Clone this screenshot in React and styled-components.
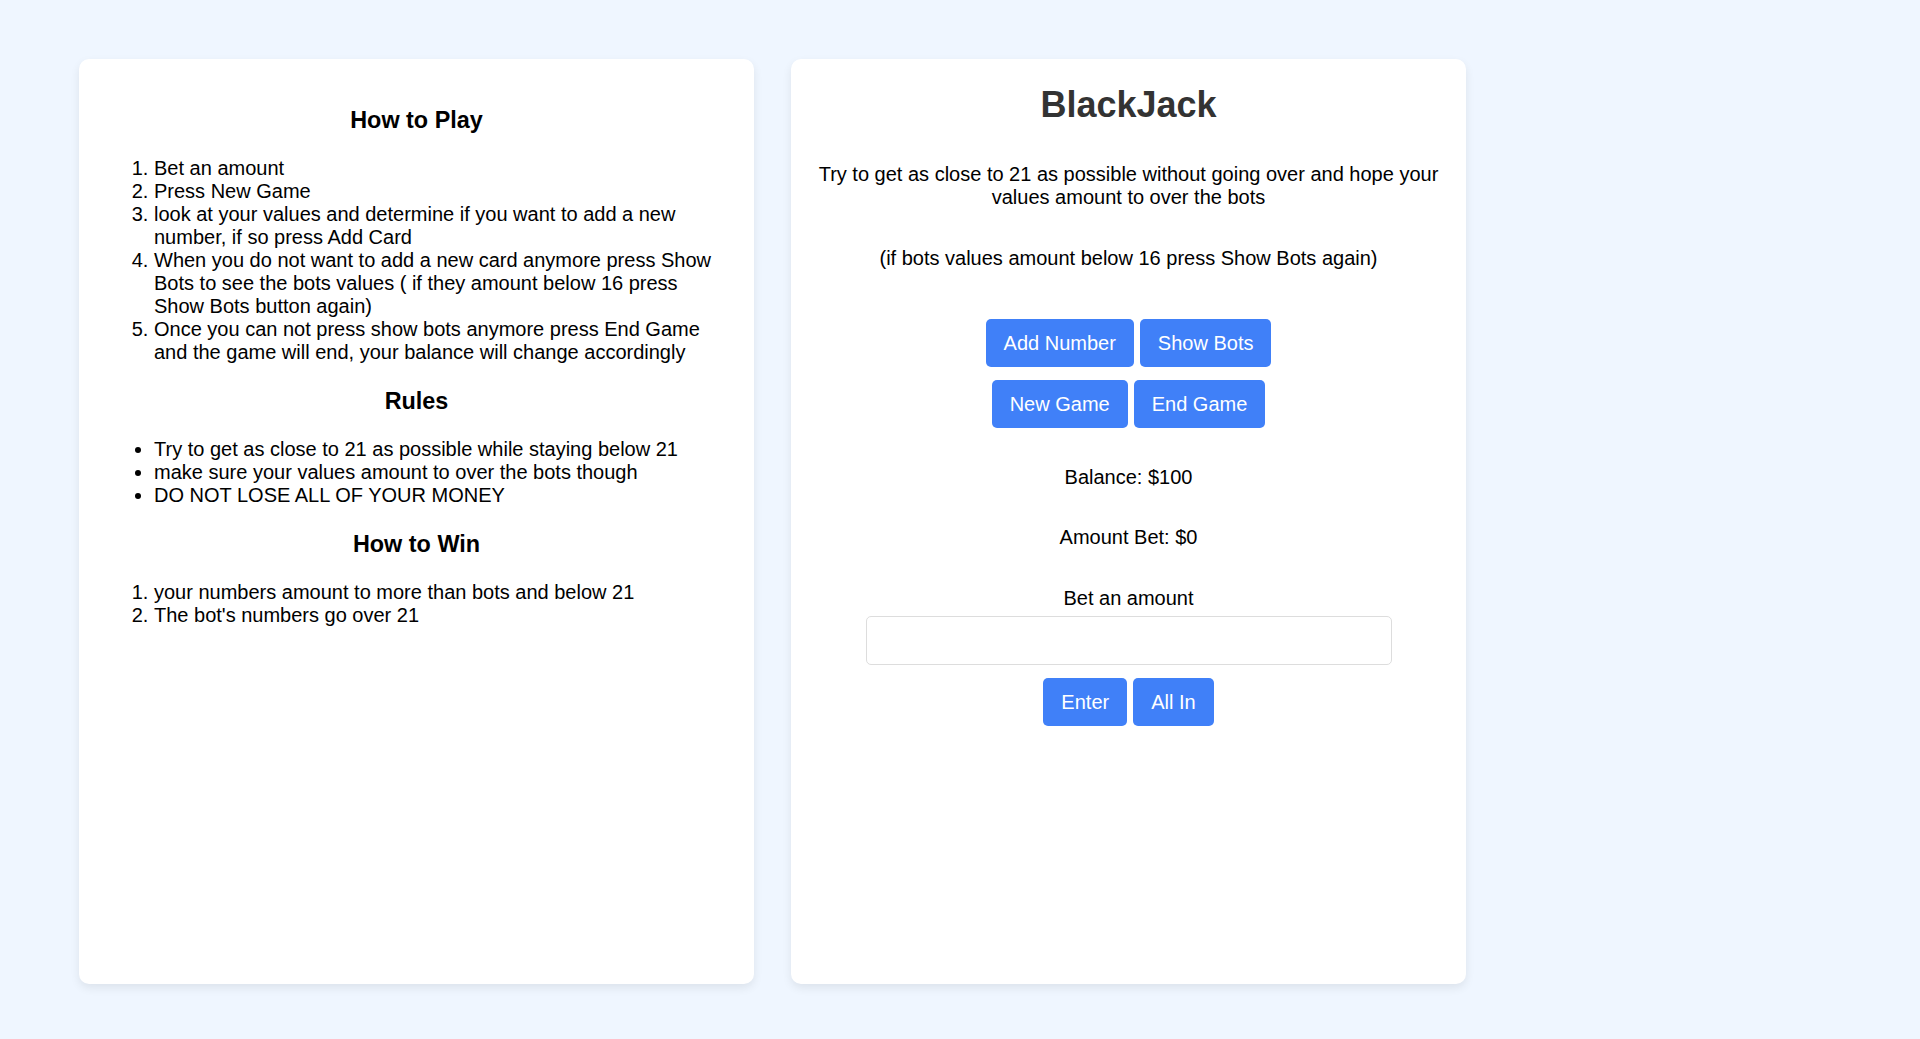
import styled, { createGlobalStyle } from "styled-components"

const GlobalStyle = createGlobalStyle`
    body {
        margin: 0;
        background-color: #eff6ff;
        font-family: "Liberation Sans", Arial, sans-serif;
        color: #000;
    }
`

const Page = styled.div`
    display: flex;
    gap: 37px;
    padding: 59px 0 55px 79px;
    min-height: 100vh;
    box-sizing: border-box;
`
const Card = styled.div`
    width: 675px;
    height: 925px;
    box-sizing: border-box;
    background-color: white;
    border-radius: 10px;
    box-shadow: 0 4px 10px rgba(0, 0, 0, 0.08);
    padding: ${props => props.$padding};
    text-align: ${props => props.$align || "left"};
`
const Heading = styled.h3`
    text-align: center;
    font-size: 23.4px;
    line-height: 27px;
    font-weight: 700;
    margin: 24.4px 0 22.6px;
`
const List = styled.ol`
    margin: 20px 0;
    padding-left: 40px;
    font-size: 20px;
    line-height: 23px;
`
const Title = styled.h1`
    margin: 0;
    font-size: 36px;
    line-height: 41px;
    font-weight: 700;
    color: #333;
`
const Text = styled.p`
    margin: ${props => props.$top}px 0 0;
    font-size: 20px;
    line-height: 23px;
`
const ButtonRow = styled.div`
    display: flex;
    justify-content: center;
    gap: 6px;
    margin-top: ${props => props.$top}px;
`
const Button = styled.button`
    padding: 12px 18px;
    font-family: inherit;
    font-size: 20px;
    line-height: 24px;
    color: white;
    background-color: #4080f8;
    border: none;
    border-radius: 5px;
    cursor: pointer;
    &:hover {
        background-color: #2f6ee6;
    }
`
const Input = styled.input`
    display: block;
    width: 526px;
    height: 49px;
    box-sizing: border-box;
    margin: 6px auto 0;
    padding: 0 12px;
    border: 1px solid #ddd;
    border-radius: 5px;
    font-family: inherit;
    font-size: 20px;
    outline: none;
`

const App = () => {
  return (
    <>
        <GlobalStyle/>
        <Page>
            <Card $padding="24px 35px">
                <Heading>How to Play</Heading>
                <List>
                    <li>Bet an amount</li>
                    <li>Press New Game</li>
                    <li>look at your values and determine if you want to add a new number, if so press Add Card</li>
                    <li>When you do not want to add a new card anymore press Show Bots to see the bots values ( if they amount below 16 press Show Bots button again)</li>
                    <li>Once you can not press show bots anymore press End Game and the game will end, your balance will change accordingly</li>
                </List>
                <Heading>Rules</Heading>
                <List as="ul">
                    <li>Try to get as close to 21 as possible while staying below 21</li>
                    <li>make sure your values amount to over the bots though</li>
                    <li>DO NOT LOSE ALL OF YOUR MONEY</li>
                </List>
                <Heading>How to Win</Heading>
                <List>
                    <li>your numbers amount to more than bots and below 21</li>
                    <li>The bot's numbers go over 21</li>
                </List>
            </Card>
            <Card $padding="25px 24px 24px" $align="center">
                <Title>BlackJack</Title>
                <Text $top={38}>Try to get as close to 21 as possible without going over and hope your values amount to over the bots</Text>
                <Text $top={38}>(if bots values amount below 16 press Show Bots again)</Text>
                <ButtonRow $top={49}>
                    <Button>Add Number</Button>
                    <Button>Show Bots</Button>
                </ButtonRow>
                <ButtonRow $top={13}>
                    <Button>New Game</Button>
                    <Button>End Game</Button>
                </ButtonRow>
                <Text $top={38}>Balance: $100</Text>
                <Text $top={37}>Amount Bet: $0</Text>
                <Text $top={38}>Bet an amount</Text>
                <Input type="number"/>
                <ButtonRow $top={13}>
                    <Button>Enter</Button>
                    <Button>All In</Button>
                </ButtonRow>
            </Card>
        </Page>
    </>
  )
}

export default App
